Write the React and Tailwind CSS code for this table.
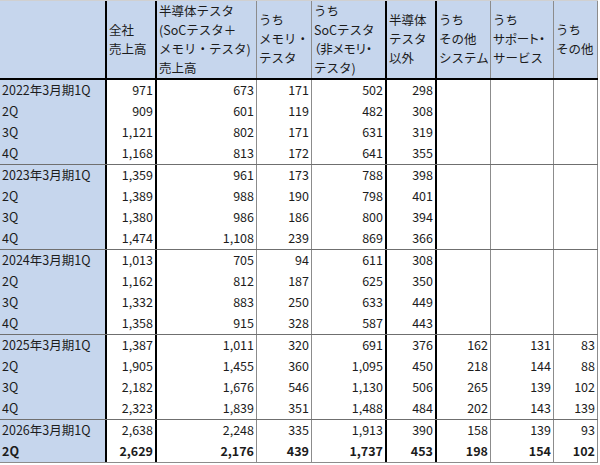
import React from "react";

const W = ["w-[107px]", "w-[50px]", "w-[100px]", "w-[55px]", "w-[75px]", "w-[50px]", "w-[54px]", "w-[63px]", "w-[44px]"];
const B = [
  "border-r-2 border-black",
  "border-r-2 border-black",
  "border-r border-[#8c8c8c]",
  "border-r border-[#8c8c8c]",
  "border-r-2 border-black",
  "border-r-2 border-black",
  "border-r border-[#8c8c8c]",
  "border-r border-[#8c8c8c]",
  "border-r border-[#8c8c8c]",
];

const P = "[font-feature-settings:'palt']";

const headers = [
  [],
  [["全社"], ["売上高"]],
  [["半導体テスタ"], ["(SoCテスタ＋"], ["メモリ・テスタ)"], ["売上高"]],
  [["うち"], ["メモリ・"], ["テスタ"]],
  [["うち"], ["SoCテスタ"], ["（非メモリ・", true], ["テスタ)"]],
  [["半導体"], ["テスタ"], ["以外"]],
  [["うち"], ["その他"], ["システム"]],
  [["うち"], ["サポート・", true], ["サービス"]],
  [["うち"], ["その他"]],
];

const groups = [
  [
    ["2022年3月期1Q", "971", "673", "171", "502", "298", "", "", ""],
    ["2Q", "909", "601", "119", "482", "308", "", "", ""],
    ["3Q", "1,121", "802", "171", "631", "319", "", "", ""],
    ["4Q", "1,168", "813", "172", "641", "355", "", "", ""],
  ],
  [
    ["2023年3月期1Q", "1,359", "961", "173", "788", "398", "", "", ""],
    ["2Q", "1,389", "988", "190", "798", "401", "", "", ""],
    ["3Q", "1,380", "986", "186", "800", "394", "", "", ""],
    ["4Q", "1,474", "1,108", "239", "869", "366", "", "", ""],
  ],
  [
    ["2024年3月期1Q", "1,013", "705", "94", "611", "308", "", "", ""],
    ["2Q", "1,162", "812", "187", "625", "350", "", "", ""],
    ["3Q", "1,332", "883", "250", "633", "449", "", "", ""],
    ["4Q", "1,358", "915", "328", "587", "443", "", "", ""],
  ],
  [
    ["2025年3月期1Q", "1,387", "1,011", "320", "691", "376", "162", "131", "83"],
    ["2Q", "1,905", "1,455", "360", "1,095", "450", "218", "144", "88"],
    ["3Q", "2,182", "1,676", "546", "1,130", "506", "265", "139", "102"],
    ["4Q", "2,323", "1,839", "351", "1,488", "484", "202", "143", "139"],
  ],
  [
    ["2026年3月期1Q", "2,638", "2,248", "335", "1,913", "390", "158", "139", "93"],
    ["2Q", "2,629", "2,176", "439", "1,737", "453", "198", "154", "102", true],
  ],
];

export default function App() {
  return (
    <div
      className="w-[600px] h-[465px] bg-white text-[#1c1c1c] text-[12.5px]"
      style={{ fontFamily: '"Noto Sans CJK JP", "Noto Sans", sans-serif' }}
    >
      <div className="w-[598px] border-t border-[#d0d0d0]">
        <div className="flex h-[79px] border-b-2 border-black bg-[#c6d6ed]">
          {headers.map((lines, i) => (
            <div
              key={i}
              className={`${W[i]} ${B[i]} h-full flex flex-col justify-center pl-[2px] pb-[2px] leading-[19px] whitespace-nowrap overflow-hidden`}
            >
              {lines.map(([t, narrow], j) => (
                <div key={j} className={narrow ? P : ""}>
                  {t}
                </div>
              ))}
            </div>
          ))}
        </div>
        {groups.map((rows, gi) => (
          <div key={gi} className={gi > 0 ? "border-t border-[#6f6f6f]" : ""}>
            {rows.map((r, ri) => (
              <div key={ri} className={`flex h-[21px] leading-[19px] ${r[9] ? "font-bold" : ""}`}>
                {W.map((w, ci) => (
                  <div
                    key={ci}
                    className={`${w} ${B[ci]} h-full whitespace-nowrap ${
                      ci === 0 ? "bg-[#c6d6ed] pl-[2px] text-left" : "bg-white pr-[2px] text-right"
                    }`}
                  >
                    {r[ci]}
                  </div>
                ))}
              </div>
            ))}
          </div>
        ))}
        <div className="border-t border-[#8c8c8c]" />
      </div>
    </div>
  );
}
